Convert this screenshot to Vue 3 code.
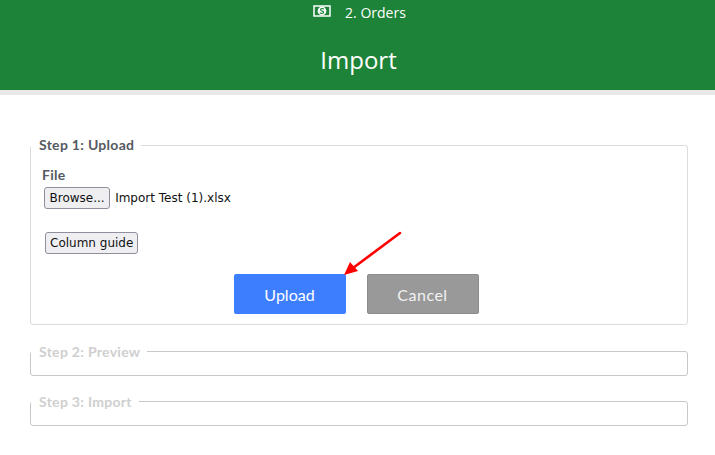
<script setup>
const pending = ['Step 2: Preview', 'Step 3: Import']
</script>

<template>
  <div class="page">
    <header class="head">
      <div class="crumb">
        <svg class="bill" width="18" height="12" viewBox="0 0 18 12">
          <rect x="1" y="1" width="16" height="10" fill="none" stroke="#fff" stroke-width="1.5" />
          <circle cx="9" cy="6" r="4.4" fill="#fff" />
          <path d="M11 4.2C9.5 3 7.2 3.6 7.6 5.2C8 6.6 10.6 5.6 10.6 7.2C10.6 8.6 8 8.8 6.8 7.7" fill="none" stroke="#1d8338" stroke-width="1.1" />
        </svg>
        <span>2. Orders</span>
      </div>
      <h1>Import</h1>
    </header>
    <div class="strip"></div>
    <main class="main">
      <fieldset class="box first">
        <legend>Step 1: Upload</legend>
        <div class="label">File</div>
        <div class="file">
          <button class="native">Browse...</button>
          <span>Import Test (1).xlsx</span>
        </div>
        <button class="native guide">Column guide</button>
        <div class="actions">
          <button class="act upload">Upload</button>
          <button class="act cancel">Cancel</button>
          <svg class="arrow" width="62" height="50" viewBox="0 0 62 50">
            <path d="M59 3L12 38" stroke="#f00" stroke-width="2.6" stroke-linecap="round" fill="none" />
            <path d="M3 45L9 32L17 41Z" fill="#f00" />
          </svg>
        </div>
      </fieldset>
      <fieldset v-for="s in pending" :key="s" class="box off">
        <legend>{{ s }}</legend>
      </fieldset>
    </main>
  </div>
</template>

<style>
html, body { margin: 0; background: #fff; }
</style>

<style scoped>
.page { width: 715px; height: 455px; overflow: hidden; position: relative; font-family: "Open Sans", sans-serif; }
.head { height: 90px; background: #1d8338; color: #fff; display: flex; flex-direction: column; align-items: center; }
.crumb { display: flex; align-items: center; gap: 14px; font-size: 14px; height: 24px; padding-left: 4px; }
.bill { display: block; margin-top: -2px; }
h1 { margin: 19px 0 0; padding-left: 2px; font-size: 24px; font-weight: 400; line-height: 33px; }
.strip { height: 5px; background: #e8e8e8; }
.main { padding: 41px 27px 0 30px; display: flex; flex-direction: column; }
.box { margin: 0; padding: 0 9px 10px 11px; border: 1px solid #dcdcdc; border-radius: 3px; min-width: 0; }
.first { margin-bottom: 1px; }
legend { margin-left: -11px; padding: 0 7px 0 8px; font-family: Lato, sans-serif; font-size: 14px; font-weight: 700; line-height: 17px; color: #555a62; letter-spacing: .3px; }
.first legend { padding-bottom: 2px; }
.label { font-family: Lato, sans-serif; font-weight: 700; font-size: 14px; line-height: 17px; color: #555a62; margin-top: 11px; letter-spacing: .3px; }
.file { display: flex; align-items: center; gap: 5px; margin: 4px 0 0 2px; font-family: "DejaVu Sans", sans-serif; font-size: 12px; color: #111; }
.native { box-sizing: border-box; height: 22px; padding: 0 4.5px; background: #efeff2; border: 1px solid #8f8f9d; border-radius: 3px; font-family: "DejaVu Sans", sans-serif; font-size: 12px; color: #111; }
.guide { display: block; margin: 23px 0 0 3px; padding: 0 4px; }
.actions { position: relative; display: flex; justify-content: center; gap: 21px; margin-top: 20px; padding-right: 8px; }
.act { box-sizing: border-box; width: 112px; height: 40px; border-radius: 2px; color: #fff; font-family: Lato, sans-serif; font-size: 16px; border: 1px solid transparent; }
.upload { background: #3d7eff; }
.cancel { background: #999; border-color: #8c8c8c; color: #f2f2f2; letter-spacing: .5px; }
.arrow { position: absolute; left: 299px; top: -44px; }
.box.off { height: 31px; box-sizing: content-box; padding: 0; margin-top: 17px; border-color: #c8c8c8; }
.off legend { margin-left: 0; color: #cfcfcf; }
</style>
